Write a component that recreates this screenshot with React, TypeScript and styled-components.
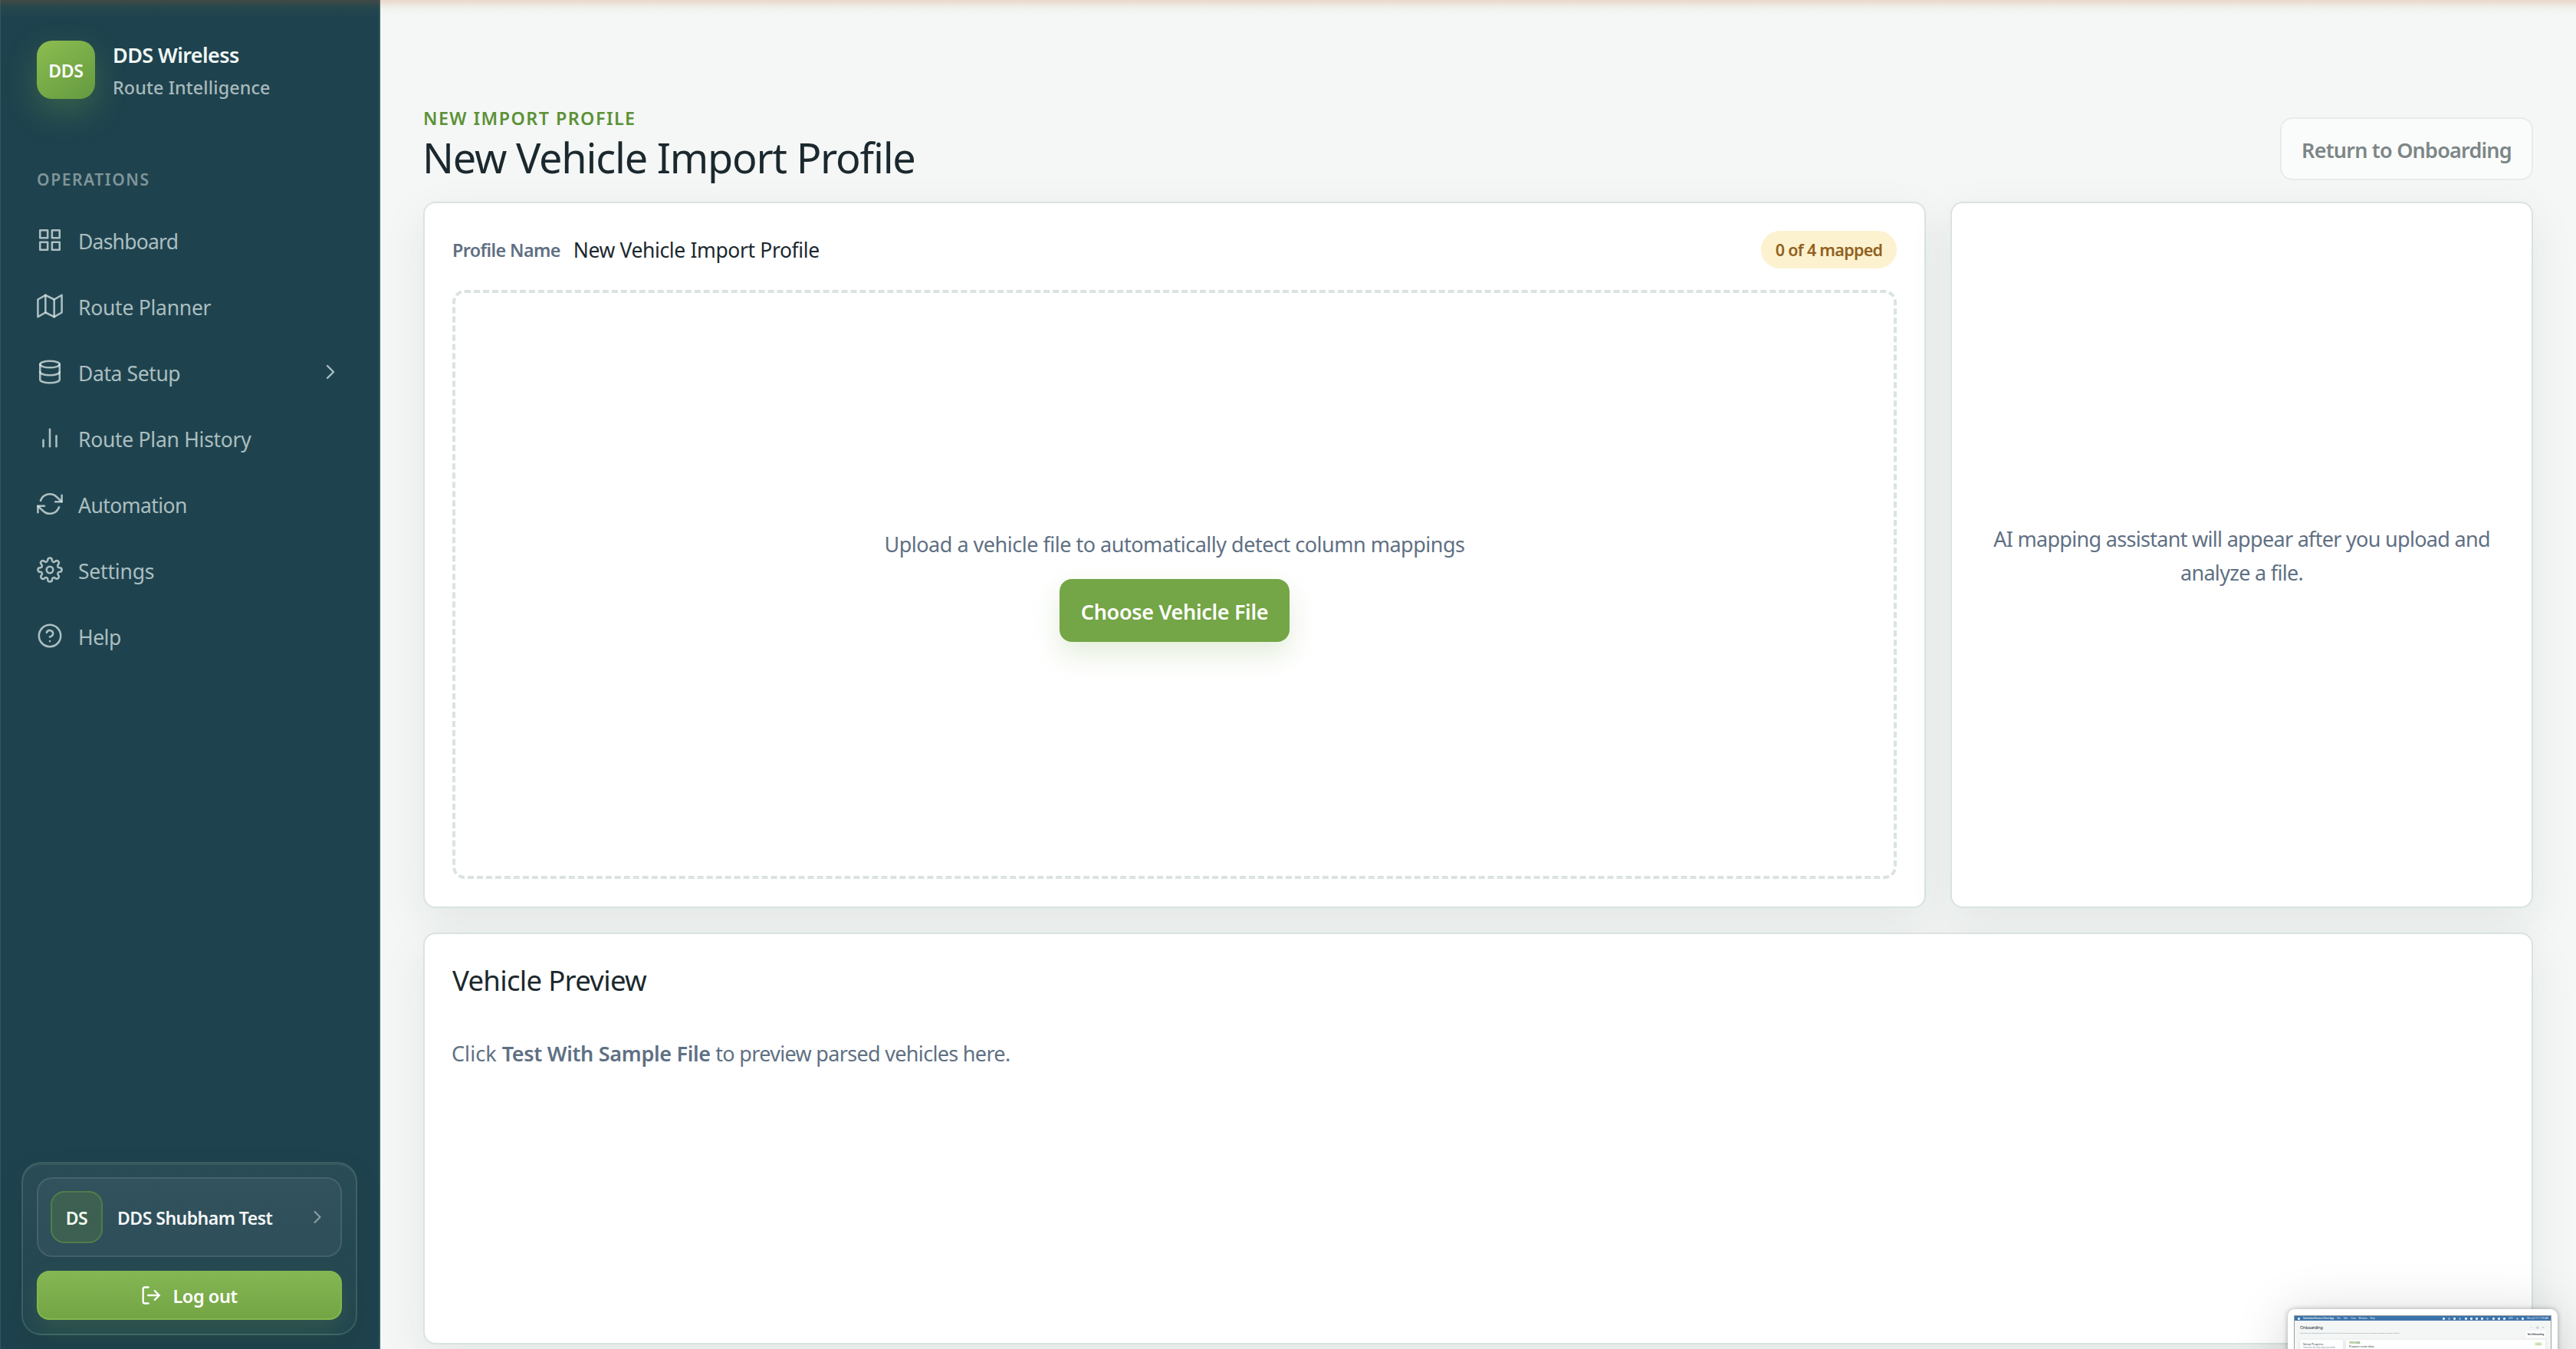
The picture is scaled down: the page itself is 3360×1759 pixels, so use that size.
import React from 'react';
import styled, { createGlobalStyle } from 'styled-components';

const GlobalStyle = createGlobalStyle`
  *, *::before, *::after { box-sizing: border-box; }
  body {
    margin: 0;
    overflow: hidden;
    background: #f4f7f6;
    font-family: "Noto Sans", "Open Sans", sans-serif;
    color: #1b282e;
  }
  h1, h2, p { margin: 0; font-weight: 400; }
  button { font-family: inherit; cursor: pointer; }
`;

const Shell = styled.div`
  position: relative;
  display: flex;
  height: 1759px;
  overflow: hidden;
`;

const TopGlow = styled.div`
  position: absolute;
  inset: 0 0 auto 0;
  height: 22px;
  pointer-events: none;
  background: linear-gradient(
    to bottom,
    rgba(190, 98, 40, 0.2) 0,
    rgba(190, 98, 40, 0.17) 3px,
    rgba(170, 115, 40, 0.08) 8px,
    rgba(150, 150, 60, 0.03) 13px,
    rgba(150, 150, 60, 0) 22px
  );
`;

/* ---------- sidebar ---------- */

const Sidebar = styled.aside`
  display: flex;
  flex-direction: column;
  flex: 0 0 496px;
  padding: 49px 28px 18px 27px;
  background: #1f434e;
  border-left: 1px solid #31565f;
  border-right: 2px solid #31565f;
`;

const Brand = styled.div`
  display: flex;
  align-items: flex-start;
  gap: 23px;
  padding: 0 20px;
`;

const BrandMark = styled.div`
  display: flex;
  align-items: center;
  justify-content: center;
  width: 76px;
  height: 76px;
  margin-top: 4px;
  padding-top: 2px;
  border-radius: 20px;
  background: linear-gradient(145deg, #8cbd50 0%, #649a40 100%);
  box-shadow: 0 16px 40px rgba(116, 166, 70, 0.3);
  color: #fff;
  font-size: 23px;
  font-weight: 600;
  letter-spacing: -0.35px;
`;

const BrandText = styled.div`
  display: flex;
  flex-direction: column;
  padding-top: 1px;
  line-height: 43px;
`;

const BrandName = styled.span`
  color: #f0f8f5;
  font-size: 27px;
  font-weight: 600;
  letter-spacing: -0.59px;
`;

const BrandTag = styled.span`
  color: #a9babd;
  font-size: 23.3px;
  font-weight: 500;
  letter-spacing: 0.13px;
`;

const NavHeading = styled.div`
  margin-top: 83px;
  padding: 0 20px;
  color: #7f959a;
  font-size: 21px;
  font-weight: 600;
  line-height: 30px;
  letter-spacing: 1.6px;
`;

const Nav = styled.nav`
  display: flex;
  flex-direction: column;
  margin-top: 21px;
`;

const NavItem = styled.a`
  display: flex;
  align-items: center;
  gap: 20px;
  height: 86px;
  padding: 0 19px 0 20px;
  color: rgba(220, 232, 232, 0.75);
`;

const NavLabel = styled.span<{ $tracking: number }>`
  flex: 1;
  padding-top: 3px;
  font-size: 26.5px;
  line-height: 36px;
  letter-spacing: ${(p) => p.$tracking}px;
`;

const Glyph = styled.svg<{ $size: number; $weight?: number }>`
  flex: none;
  width: ${(p) => p.$size}px;
  height: ${(p) => p.$size}px;
  fill: none;
  stroke: currentColor;
  stroke-width: ${(p) => p.$weight ?? 1.8};
  stroke-linecap: round;
  stroke-linejoin: round;
`;

const AccountPanel = styled.section`
  display: flex;
  flex-direction: column;
  gap: 18px;
  width: 438px;
  margin-top: auto;
  padding: 18px;
  border: 2px solid rgba(150, 190, 160, 0.2);
  border-radius: 26px;
  background: linear-gradient(180deg, rgba(255, 255, 255, 0.05), rgba(255, 255, 255, 0.01));
  box-shadow: 0 16px 40px rgba(0, 0, 0, 0.08), inset 0 2px 0 rgba(255, 255, 255, 0.06);
`;

const AccountCard = styled.div`
  display: flex;
  align-items: center;
  height: 104px;
  padding: 0 16px;
  border: 2px solid rgba(255, 255, 255, 0.1);
  border-radius: 20px;
  background: rgba(255, 255, 255, 0.045);
  color: rgba(255, 255, 255, 0.45);
`;

const Avatar = styled.div`
  display: flex;
  align-items: center;
  justify-content: center;
  width: 68px;
  height: 68px;
  padding-top: 2px;
  border: 2px solid #4f7d4c;
  border-radius: 18px;
  background: #3d6052;
  color: #f2fbee;
  font-size: 23px;
  font-weight: 600;
  letter-spacing: -0.6px;
`;

const AccountName = styled.span`
  flex: 1;
  margin-left: 19px;
  padding-top: 2px;
  color: #f3f6f7;
  font-size: 23px;
  font-weight: 600;
  letter-spacing: -0.51px;
`;

const LogoutButton = styled.button`
  display: flex;
  align-items: center;
  justify-content: center;
  gap: 15px;
  height: 64px;
  padding: 0 2px 0 0;
  border: 2px solid #83b84c;
  border-top-color: #85b753;
  border-radius: 16px;
  background: linear-gradient(180deg, #85b654, #74a544);
  box-shadow: 0 14px 32px rgba(116, 166, 70, 0.2);
  color: #fff;
  font-size: 23.5px;
  font-weight: 600;
  letter-spacing: -0.43px;
`;

const LogoutLabel = styled.span`
  padding-top: 1px;
`;

/* ---------- page ---------- */

const Main = styled.main`
  display: flex;
  flex-direction: column;
  flex: 1;
  min-width: 0;
  padding: 138px 56px 0;
`;

const PageHeader = styled.header`
  display: flex;
  align-items: flex-end;
  justify-content: space-between;
  margin-bottom: 28px;
`;

const Eyebrow = styled.div`
  color: #5c9137;
  font-size: 23.3px;
  font-weight: 600;
  line-height: 32px;
  letter-spacing: 1.45px;
`;

const PageTitle = styled.h1`
  margin: 5px 0 0 -1px;
  font-size: 54px;
  line-height: 60px;
  letter-spacing: -1.22px;
`;

const ReturnButton = styled.button`
  display: flex;
  align-items: center;
  justify-content: center;
  width: 330px;
  height: 82px;
  padding: 3px 0 0;
  border: 2px solid #e7ebea;
  border-radius: 16px;
  background: #fafcfb;
  color: #7d8687;
  font-size: 27px;
  font-weight: 600;
  letter-spacing: -0.79px;
`;

const MappingGrid = styled.div`
  display: grid;
  grid-template-columns: 1fr 760px;
  gap: 32px;
  height: 921px;
  margin-bottom: 32px;
`;

const Card = styled.section`
  display: flex;
  flex-direction: column;
  padding: 36px;
  border: 2px solid #dae3e1;
  border-radius: 16px;
  background: #fff;
  box-shadow: 0 20px 60px rgba(20, 35, 35, 0.08);
`;

const AssistantCard = styled(Card)`
  align-items: center;
  justify-content: center;
  padding-top: 39px;
`;

const PreviewCard = styled(Card)`
  height: 537px;
`;

const ProfileRow = styled.div`
  display: flex;
  align-items: center;
  height: 49px;
  margin-bottom: 28px;
`;

const FieldLabel = styled.span`
  color: #5f7083;
  font-size: 23.3px;
  font-weight: 600;
  letter-spacing: -0.6px;
`;

const FieldValue = styled.span`
  flex: 1;
  margin-left: 17px;
  font-size: 26.5px;
  letter-spacing: -0.38px;
`;

const MappedBadge = styled.span`
  display: flex;
  align-items: center;
  justify-content: center;
  width: 177px;
  height: 49px;
  border-radius: 25px;
  background: #fdf2d0;
  color: #916120;
  font-size: 21.5px;
  font-weight: 600;
  letter-spacing: -0.7px;
`;

const DropZone = styled.div`
  display: flex;
  flex: 1;
  flex-direction: column;
  align-items: center;
  justify-content: center;
  gap: 23px;
  padding-top: 1px;
  border: 4px dashed #dae3e1;
  border-radius: 16px;
`;

const Hint = styled.p<{ $tracking: number }>`
  max-width: 680px;
  color: #5f7083;
  font-size: 27px;
  line-height: 44px;
  text-align: center;
  letter-spacing: ${(p) => p.$tracking}px;
`;

const DropHint = styled(Hint)`
  max-width: none;
`;

const ChooseButton = styled.button`
  display: flex;
  align-items: center;
  justify-content: center;
  width: 300px;
  height: 82px;
  padding: 3px 0 0;
  border: 0;
  border-radius: 16px;
  background: #74a546;
  box-shadow: 0 16px 36px rgba(116, 166, 70, 0.2);
  color: #fff;
  font-size: 27px;
  font-weight: 600;
  letter-spacing: -0.33px;
`;

const SectionTitle = styled.h2`
  font-size: 36.5px;
  line-height: 48px;
  letter-spacing: -0.7px;
`;

const PreviewHint = styled.p`
  margin: 50px 0 0 -1px;
  color: #5f7083;
  font-size: 27px;
  line-height: 44px;
  letter-spacing: -0.68px;

  strong {
    font-weight: 600;
    letter-spacing: -0.31px;
  }
`;

const PreviewLead = styled.span`
  letter-spacing: 0.05px;
`;

/* ---------- floating screen capture ---------- */

const Capture = styled.aside`
  position: absolute;
  left: 2984px;
  top: 1707px;
  width: 352px;
  height: 220px;
  padding: 8px;
  border-radius: 9px;
  background: #fff;
  box-shadow: 0 0 6px rgba(0, 0, 0, 0.3), 0 10px 70px rgba(0, 0, 0, 0.18);
`;

const CaptureScreen = styled.div`
  height: 204px;
  border: 1px solid #9a9fa3;
  background: #f3f6f5;
`;

const MenuBar = styled.div`
  display: flex;
  align-items: center;
  height: 6px;
  padding: 0 3px 0 4px;
  gap: 4px;
  background: #3b73ab;
  color: #e4edf5;
  font-size: 2.9px;
  line-height: 6px;
  white-space: nowrap;

  b { font-weight: 600; }
`;

const AppleDot = styled.i`
  width: 3px;
  height: 3px;
  border-radius: 50%;
  background: #fff;
`;

const Tray = styled.div`
  display: flex;
  align-items: center;
  gap: 4.2px;
  margin-left: auto;
`;

const TrayDot = styled.i<{ $hollow?: boolean }>`
  width: 3px;
  height: 3px;
  border-radius: ${(p) => (p.$hollow ? '50%' : '1px')};
  background: ${(p) => (p.$hollow ? 'rgba(228, 237, 245, 0.5)' : '#e4edf5')};
`;

const CaptureHead = styled.div`
  display: flex;
  justify-content: space-between;
  height: 25px;
  padding: 5px 7px 0;
`;

const CaptureTitle = styled.div`
  margin-top: 0.5px;
  color: #27343a;
  font-size: 6px;
  line-height: 7px;
  letter-spacing: -0.45px;
`;

const CaptureSub = styled.div`
  margin-top: 1px;
  color: #75828f;
  font-size: 2.35px;
  line-height: 4px;
`;

const CaptureActions = styled.div`
  display: flex;
  flex-direction: column;
  align-items: flex-end;
  gap: 2px;
`;

const WindowControls = styled.div`
  display: flex;
  gap: 5px;
  padding-right: 2px;
  color: #68747a;
  font-size: 4px;
  line-height: 7px;
`;

const ExitButton = styled.div`
  width: 25px;
  height: 8px;
  border-radius: 2px;
  background: #fff;
  font-size: 2.7px;
  font-weight: 600;
  line-height: 8px;
  text-align: center;
`;

const CaptureCards = styled.div`
  display: grid;
  grid-template-columns: 56px 1fr;
  gap: 4px;
  height: 100px;
  padding: 0 7px;
`;

const CaptureCard = styled.div`
  display: flex;
  justify-content: space-between;
  padding: 3px 4px;
  border-radius: 2px;
  background: #fff;
  box-shadow: 0 1px 4px rgba(20, 35, 35, 0.1);
  color: #27343a;
  font-size: 3.7px;
  line-height: 5px;
  white-space: nowrap;
`;

const CaptureNote = styled.div`
  color: #75828f;
  font-size: 2.6px;
`;

const CaptureTag = styled.div`
  color: #5c9137;
  font-size: 2.6px;
  font-weight: 600;
  line-height: 3px;
`;

const ReadyPill = styled.div`
  width: 10px;
  height: 5px;
  border-radius: 3px;
  background: #dff0cf;
  color: #5c9137;
  font-size: 2.5px;
  line-height: 5px;
  text-align: center;
`;

const NAV = [
  {
    label: 'Dashboard',
    tracking: -0.77,
    icon: (
      <>
        <rect x="3" y="3" width="7" height="7" />
        <rect x="14" y="3" width="7" height="7" />
        <rect x="14" y="14" width="7" height="7" />
        <rect x="3" y="14" width="7" height="7" />
      </>
    ),
  },
  {
    label: 'Route Planner',
    tracking: -0.26,
    icon: (
      <>
        <polygon points="1 6 1 22 8 18 16 22 23 18 23 2 16 6 8 2 1 6" />
        <line x1="8" y1="2" x2="8" y2="18" />
        <line x1="16" y1="6" x2="16" y2="22" />
      </>
    ),
  },
  {
    label: 'Data Setup',
    tracking: -0.4,
    expandable: true,
    icon: (
      <>
        <ellipse cx="12" cy="5" rx="9" ry="3" />
        <path d="M21 12c0 1.66-4 3-9 3s-9-1.34-9-3" />
        <path d="M3 5v14c0 1.66 4 3 9 3s9-1.34 9-3V5" />
      </>
    ),
  },
  {
    label: 'Route Plan History',
    tracking: -0.28,
    icon: (
      <>
        <line x1="18" y1="20" x2="18" y2="10" />
        <line x1="12" y1="20" x2="12" y2="4" />
        <line x1="6" y1="20" x2="6" y2="14" />
      </>
    ),
  },
  {
    label: 'Automation',
    tracking: -0.55,
    icon: (
      <>
        <polyline points="23 4 23 10 17 10" />
        <polyline points="1 20 1 14 7 14" />
        <path d="M3.51 9a9 9 0 0 1 14.85-3.36L23 10M1 14l4.64 4.36A9 9 0 0 0 20.49 15" />
      </>
    ),
  },
  {
    label: 'Settings',
    tracking: -0.2,
    icon: (
      <>
        <circle cx="12" cy="12" r="3" />
        <path d="M19.4 15a1.65 1.65 0 0 0 .33 1.82l.06.06a2 2 0 1 1-2.83 2.83l-.06-.06a1.65 1.65 0 0 0-2.8 1.17V21a2 2 0 0 1-4 0v-.09a1.65 1.65 0 0 0-2.91-1.18l-.06.06a2 2 0 1 1-2.83-2.83l.06-.06A1.65 1.65 0 0 0 3.09 14H3a2 2 0 0 1 0-4h.09a1.65 1.65 0 0 0 1.18-2.91l-.06-.06a2 2 0 1 1 2.83-2.83l.06.06A1.65 1.65 0 0 0 10 3.09V3a2 2 0 0 1 4 0v.09a1.65 1.65 0 0 0 2.91 1.18l.06-.06a2 2 0 1 1 2.83 2.83l-.06.06A1.65 1.65 0 0 0 20.91 10H21a2 2 0 0 1 0 4h-.09a1.65 1.65 0 0 0-1.51 1z" />
      </>
    ),
  },
  {
    label: 'Help',
    tracking: -0.5,
    icon: (
      <>
        <circle cx="12" cy="12" r="10" />
        <path d="M9.09 9a3 3 0 0 1 5.83 1c0 2-3 3-3 3" />
        <line x1="12" y1="17" x2="12.01" y2="17" />
      </>
    ),
  },
];

const TRAY = [0, 1, 0, 1, 0, 0, 0, 0, 1, 0, 0, 0];

export default function App() {
  return (
    <Shell>
      <GlobalStyle />
      <Sidebar>
        <Brand>
          <BrandMark>DDS</BrandMark>
          <BrandText>
            <BrandName>DDS Wireless</BrandName>
            <BrandTag>Route Intelligence</BrandTag>
          </BrandText>
        </Brand>
        <NavHeading>OPERATIONS</NavHeading>
        <Nav>
          {NAV.map((item) => (
            <NavItem key={item.label}>
              <Glyph $size={34} viewBox="0 0 24 24">
                {item.icon}
              </Glyph>
              <NavLabel $tracking={item.tracking}>{item.label}</NavLabel>
              {item.expandable && (
                <Glyph $size={32} viewBox="0 0 24 24">
                  <polyline points="9 18 15 12 9 6" />
                </Glyph>
              )}
            </NavItem>
          ))}
        </Nav>
        <AccountPanel>
          <AccountCard>
            <Avatar>DS</Avatar>
            <AccountName>DDS Shubham Test</AccountName>
            <Glyph $size={28} $weight={1.8} viewBox="0 0 24 24">
              <polyline points="9 18 15 12 9 6" />
            </Glyph>
          </AccountCard>
          <LogoutButton>
            <Glyph $size={28} $weight={2} viewBox="0 0 24 24">
              <path d="M10 21H6a2 2 0 0 1-2-2V5a2 2 0 0 1 2-2h4" />
              <polyline points="17 17 22 12 17 7" />
              <line x1="22" y1="12" x2="9.5" y2="12" />
            </Glyph>
            <LogoutLabel>Log out</LogoutLabel>
          </LogoutButton>
        </AccountPanel>
      </Sidebar>

      <Main>
        <PageHeader>
          <div>
            <Eyebrow>NEW IMPORT PROFILE</Eyebrow>
            <PageTitle>New Vehicle Import Profile</PageTitle>
          </div>
          <ReturnButton>Return to Onboarding</ReturnButton>
        </PageHeader>

        <MappingGrid>
          <Card>
            <ProfileRow>
              <FieldLabel>Profile Name</FieldLabel>
              <FieldValue>New Vehicle Import Profile</FieldValue>
              <MappedBadge>0 of 4 mapped</MappedBadge>
            </ProfileRow>
            <DropZone>
              <DropHint $tracking={-0.49}>
                Upload a vehicle file to automatically detect column mappings
              </DropHint>
              <ChooseButton>Choose Vehicle File</ChooseButton>
            </DropZone>
          </Card>
          <AssistantCard>
            <Hint $tracking={-0.7}>
              AI mapping assistant will appear after you upload and analyze a file.
            </Hint>
          </AssistantCard>
        </MappingGrid>

        <PreviewCard>
          <SectionTitle>Vehicle Preview</SectionTitle>
          <PreviewHint>
            <PreviewLead>Click </PreviewLead>
            <strong>Test With Sample File</strong> to preview parsed vehicles here.
          </PreviewHint>
        </PreviewCard>
      </Main>

      <Capture>
        <CaptureScreen>
          <MenuBar>
            <AppleDot />
            <b>Scheduled Routes Client App</b>
            <span>File</span>
            <span>Edit</span>
            <span>View</span>
            <span>Window</span>
            <span>Help</span>
            <Tray>
              {TRAY.map((hollow, i) => (
                <TrayDot key={i} $hollow={!!hollow} />
              ))}
              <span>45%</span>
              <TrayDot $hollow />
              <TrayDot />
              <span>Mon Jul 13 11:50 AM</span>
            </Tray>
          </MenuBar>
          <CaptureHead>
            <div>
              <CaptureTitle>Onboarding</CaptureTitle>
              <CaptureSub>
                Let's get your vehicles and jobs in so you can build your first route plan. Day to day planning happens
                in Route Planner.
              </CaptureSub>
            </div>
            <CaptureActions>
              <WindowControls>
                <span>−</span>
                <span>◎</span>
                <span>×</span>
              </WindowControls>
              <ExitButton>Exit Onboarding</ExitButton>
            </CaptureActions>
          </CaptureHead>
          <CaptureCards>
            <CaptureCard>
              <div>
                Setup Progress
                <CaptureNote>These are the only steps you need</CaptureNote>
              </div>
            </CaptureCard>
            <CaptureCard>
              <div>
                <CaptureTag>YOUR DATA</CaptureTag>
                Prepare route data
              </div>
              <ReadyPill>Ready</ReadyPill>
            </CaptureCard>
          </CaptureCards>
        </CaptureScreen>
      </Capture>
      <TopGlow />
    </Shell>
  );
}
